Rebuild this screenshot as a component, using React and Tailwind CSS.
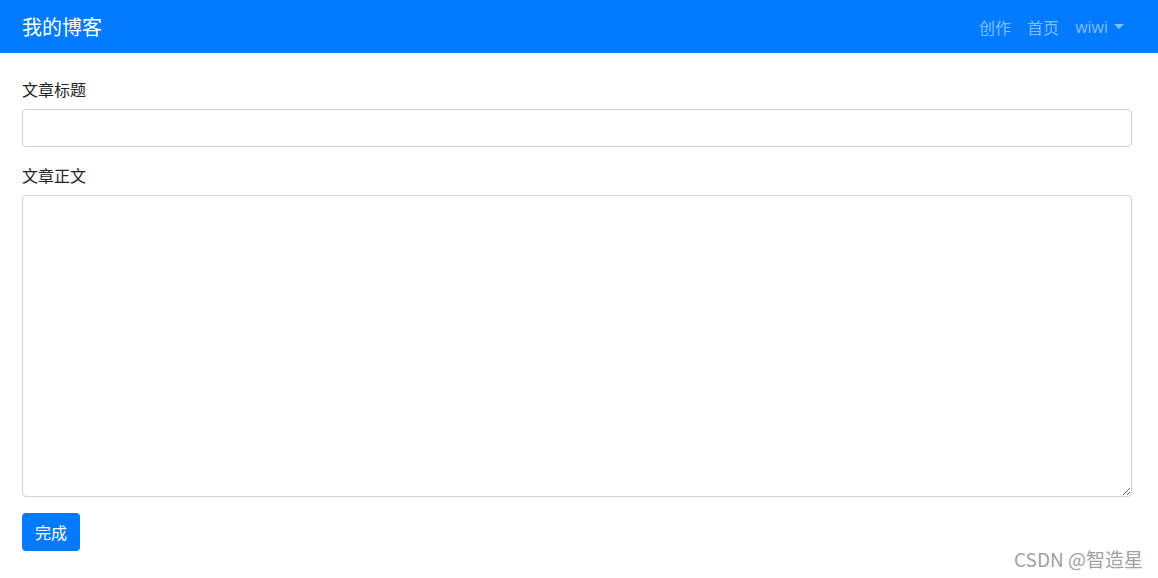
export default function App() {
  const cjk = { fontFamily: '"Noto Sans CJK SC", "Noto Sans", sans-serif' };

  return (
    <div className="relative min-h-[578px] bg-white text-[#212529]" style={cjk}>
      {/* Navbar */}
      <nav className="h-[53px] bg-[#007bff] flex items-center justify-between pl-[22px] pr-[26px]">
        <a className="text-[20px] leading-[30px] text-white">我的博客</a>
        <div className="flex items-center text-[16px] text-white/50 pr-[8px]">
          <a className="px-[8px]">创作</a>
          <a className="px-[8px]">首页</a>
          <a className="pl-[8px] flex items-center" style={{ fontFamily: '"Open Sans", "Noto Sans CJK SC", sans-serif' }}>
            wiwi
            <span className="ml-[6px] w-0 h-0 border-l-[5px] border-r-[5px] border-t-[5px] border-l-transparent border-r-transparent border-t-white/50" />
          </a>
        </div>
      </nav>

      {/* Form */}
      <main className="pl-[22px] pr-[26px] pt-[24px]">
        <div className="mb-[16px]">
          <label className="block text-[16px] leading-[24px] mb-[8px]">文章标题</label>
          <input className="block w-full h-[38px] border border-[#ced4da] rounded-[4px] px-3 outline-none" />
        </div>
        <div className="mb-[16px]">
          <label className="block text-[16px] leading-[24px] mb-[8px]">文章正文</label>
          <textarea className="block w-full h-[302px] border border-[#ced4da] rounded-[4px] px-3 py-1.5 outline-none" />
        </div>
        <button className="h-[38px] px-[13px] bg-[#007bff] text-white text-[16px] rounded-[4px]">完成</button>
      </main>

      {/* Watermark */}
      <div className="absolute right-[15px] bottom-[5px] text-[19px] text-[#a0a0a0]">CSDN @智造星</div>
    </div>
  );
}
